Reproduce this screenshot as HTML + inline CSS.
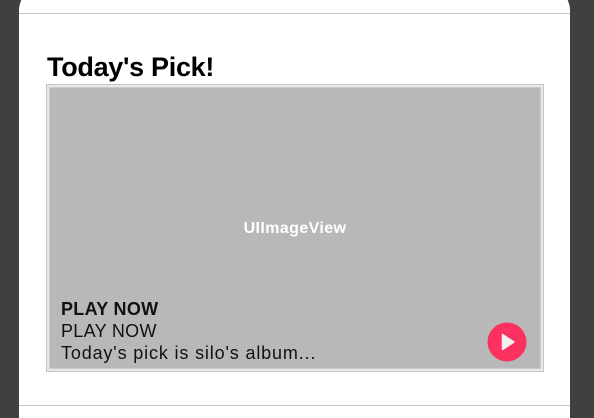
<!DOCTYPE html>
<html><head><meta charset="utf-8"><style>
html,body{margin:0;padding:0;width:594px;height:418px;overflow:hidden;background:#404040;font-family:"Liberation Sans",sans-serif;}
.panel{position:absolute;left:19px;top:-12px;width:551px;height:430px;background:#fff;border-radius:22px 22px 0 0;}
.line{position:absolute;left:19px;width:551px;height:1px;background:#c8c8c8;}
.title{position:absolute;left:47px;top:52px;font-size:27px;font-weight:bold;color:#000;letter-spacing:-0.3px;}
.outer{position:absolute;left:46px;top:84px;width:496px;height:286px;border:1px solid #c4c4c4;background:#e8e8e8;}
.inner{position:absolute;left:49px;top:87px;width:492px;height:282px;background:#b8b8b8;border:1px solid #c9c9c9;box-sizing:border-box;}
.lbl{position:absolute;left:0;width:100%;top:132px;text-align:center;color:#fff;font-weight:bold;font-size:16px;letter-spacing:0.4px;}
.t{position:absolute;left:61px;font-size:18px;color:#111;letter-spacing:0.85px;}
</style></head><body>
<div class="panel"></div>
<div class="line" style="top:13px"></div>
<div class="line" style="top:405px"></div>
<div class="title">Today's Pick!</div>
<div class="outer"></div>
<div class="inner"><div class="lbl">UIImageView</div></div>
<div class="t" style="top:299px;font-weight:bold;letter-spacing:0.3px">PLAY NOW</div>
<div class="t" style="top:321px;letter-spacing:0.3px">PLAY NOW</div>
<div class="t" style="top:343px">Today's pick is silo's album...</div>
<svg style="position:absolute;left:487px;top:322px" width="40" height="40" viewBox="0 0 40 40">
<circle cx="20" cy="20" r="19.5" fill="#fd3160"/>
<path d="M15.5 12.5 L27 20 L15.5 27.5 Z" fill="#f0f0f0" stroke="#f0f0f0" stroke-width="1.5" stroke-linejoin="round"/>
</svg>
</body></html>
